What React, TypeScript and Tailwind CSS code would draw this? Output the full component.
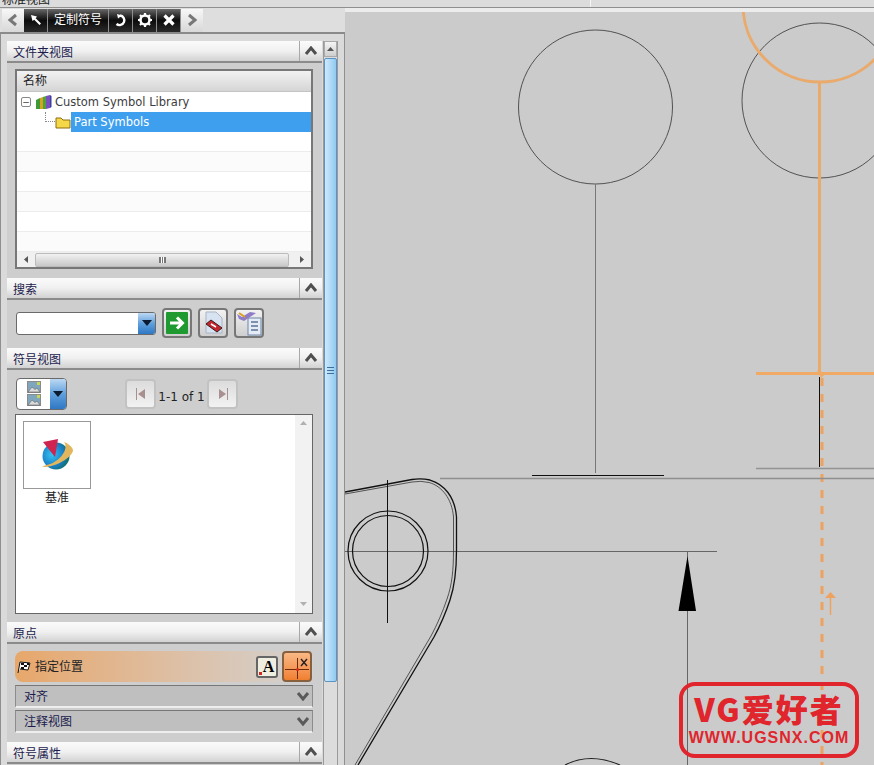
import type { ReactNode } from "react";

function Chevron({ down = false, color = "#4f4f4f" }: { down?: boolean; color?: string }) {
  return (
    <svg width="14" height="10" viewBox="0 0 14 10">
      <path
        d={down ? "M2 2 L7 8 L12 2" : "M2 8 L7 2 L12 8"}
        fill="none"
        stroke={color}
        strokeWidth="3"
      />
    </svg>
  );
}

function SectionHeader({ title }: { title: string }) {
  return (
    <div className="flex h-[22px] shrink-0 border-b-2 border-[#8b8b8b] bg-gradient-to-b from-[#fbfbfb] via-[#f0f0f0] to-[#d2d2d2]">
      <span className="flex-1 pl-[6px] text-[12px] leading-[24px] text-[#1b1b4d]">{title}</span>
      <span className="flex w-[23px] items-center justify-center border-l border-[#a8a8a8]">
        <Chevron />
      </span>
    </div>
  );
}

function ToolButton({ children, wide = false }: { children: ReactNode; wide?: boolean }) {
  return (
    <div
      className={`flex h-[23px] items-center justify-center border-r border-[#8e8e8e] bg-gradient-to-b from-[#6a6a6a] via-[#0c0c0c] to-[#2a2a2a] text-[12px] text-white ${
        wide ? "w-[61px]" : "w-[24px]"
      }`}
    >
      {children}
    </div>
  );
}

function IconButton({ children, className = "" }: { children: ReactNode; className?: string }) {
  return (
    <div
      className={`flex h-[30px] w-[30px] items-center justify-center rounded-[4px] border-2 border-[#777] bg-gradient-to-b from-[#f2f2f2] to-[#cfcfcf] ${className}`}
    >
      {children}
    </div>
  );
}

function DropArrow({ className = "" }: { className?: string }) {
  return (
    <div
      className={`flex items-center justify-center bg-gradient-to-b from-[#bcd8f2] via-[#5f9fdc] to-[#2f78c4] ${className}`}
    >
      <svg width="12" height="8" viewBox="0 0 12 8">
        <path d="M1 1 H11 L6 7 Z" fill="#0b1a2e" />
      </svg>
    </div>
  );
}

function FoldRow({ title }: { title: string }) {
  return (
    <div className="flex h-[23px] items-center border-x border-t border-b-2 border-x-[#8d8d8d] border-t-[#777] border-b-[#eeeeee] bg-[#bfbfbf] pl-[8px] pr-[2px]">
      <span className="flex-1 pt-[2px] text-[12px] text-[#1b1b4d]">{title}</span>
      <Chevron down color="#5a5a5a" />
    </div>
  );
}

function PicturePair() {
  return (
    <svg width="14" height="25" viewBox="0 0 14 25">
      <rect x="0.5" y="0.5" width="13" height="11" fill="#7fa6bd" stroke="#8a8a8a" />
      <path d="M1 11 L5 6 L8 8.5 L10 7 L13 11 Z" fill="#d9d9d9" stroke="#666" strokeWidth="0.6" />
      <rect x="10" y="1" width="3" height="3" fill="#c9d65a" />
      <rect x="0.5" y="13.5" width="13" height="11" fill="#7fa6bd" stroke="#8a8a8a" />
      <path d="M1 24 L5 19 L8 21.5 L10 20 L13 24 Z" fill="#d9d9d9" stroke="#666" strokeWidth="0.6" />
      <rect x="10" y="14" width="3" height="3" fill="#c9d65a" />
    </svg>
  );
}

function PartDrawing() {
  return (
    <svg className="h-full w-full" viewBox="345 12 529 753">
      {/* orange highlighted symbol */}
      <circle cx="595.5" cy="107" r="77" fill="none" stroke="#444" strokeWidth="0.9" />
      <circle cx="819.5" cy="100.5" r="77.5" fill="none" stroke="#444" strokeWidth="0.9" />
      <circle cx="820" cy="5" r="77" fill="none" stroke="#e9aa6c" strokeWidth="3" />
      <path d="M819.5 82 V373" stroke="#e9aa6c" strokeWidth="3" />
      <path d="M756 373.5 H874" stroke="#f0aa66" strokeWidth="3" />
      <path d="M817 370 L826 373.5 L821 378 Z" fill="#f0aa66" />
      <path d="M819.5 377 V467" stroke="#111" strokeWidth="1" />
      <path d="M822 378 V765" stroke="#eda35f" strokeWidth="3" strokeDasharray="8 8" />
      <path d="M830.5 615 V595" stroke="#eda35f" strokeWidth="1.5" />
      <path d="M825 598 L830.5 592 L836 598 Z" fill="#eda35f" />

      {/* plain lines */}
      <path d="M595.5 184 V473" stroke="#777" strokeWidth="1" />
      <path d="M532 475.5 H664" stroke="#111" strokeWidth="1" />
      <path d="M756 468.5 H874" stroke="#939393" strokeWidth="1.5" />
      <path d="M440 478.5 H874" stroke="#8f8f8f" strokeWidth="1.5" />
      <path d="M345 551.5 H717" stroke="#666" strokeWidth="1" />
      <path d="M687.5 551 V765" stroke="#666" strokeWidth="1" />
      <path d="M687.5 556 L678.5 611 H696 Z" fill="#000" />

      {/* part outline */}
      <path
        d="M345 492 L412 479.5 Q421 478 430 480 C444 484 455 497 456.5 517 V550 C456.5 570 455 585 450 600 C446 612 440 626 434 637 L358 765"
        fill="none"
        stroke="#111"
        strokeWidth="1.3"
      />
      <path
        d="M345 494 L412 482 Q421 480.5 429 482.5 C442 486 452 499 453.5 517 V550 C453.5 570 452 585 447 599 C443 611 437 625 431 636 L355 765"
        fill="none"
        stroke="#333"
        strokeWidth="0.8"
      />
      <circle cx="388" cy="551" r="40" fill="none" stroke="#111" strokeWidth="1.2" />
      <circle cx="388" cy="551" r="35.5" fill="none" stroke="#111" strokeWidth="1.2" />
      <path d="M387.5 480 V623" stroke="#111" strokeWidth="1" />
      <path d="M565 765 Q590 752 620 765" fill="none" stroke="#222" strokeWidth="1.2" />
    </svg>
  );
}

function App() {
  return (
    <div className="relative flex h-[765px] w-[874px] flex-col overflow-hidden bg-[#cbcbcb] font-['DejaVu_Sans','Noto_Sans_CJK_SC',sans-serif]">
      {/* window strip */}
      <div className="flex h-[8px] shrink-0 border-b border-[#8f8f8f] bg-[#dcdcdc]">
        <div className="w-[591px] overflow-hidden border-r border-[#f5f5f5] pl-[2px] text-[12px] leading-[1px] text-[#222]">
          标准视图
        </div>
      </div>

      <div className="flex min-h-0 flex-1">
        {/* left dock */}
        <div className="flex w-[345px] shrink-0 flex-col">
          <div className="flex h-[24px] shrink-0 items-center bg-[#dedede] pl-[2px]">
            <div className="flex h-[23px] w-[22px] items-center justify-center bg-gradient-to-b from-[#f7f7f7] to-[#d8d8d8]">
              <svg width="12" height="14" viewBox="0 0 12 14">
                <path d="M9 2 L3 7 L9 12" fill="none" stroke="#777" strokeWidth="3" />
              </svg>
            </div>
            <ToolButton>
              <svg width="14" height="14" viewBox="0 0 14 14">
                <path d="M2 2 L8 3.5 L6.7 5.2 L12 10.5 L10.5 12 L5.2 6.7 L3.5 8 Z" fill="#fff" />
              </svg>
            </ToolButton>
            <ToolButton wide>定制符号</ToolButton>
            <ToolButton>
              <svg width="14" height="14" viewBox="0 0 14 14">
                <path d="M6 2.5 A4.8 4.8 0 1 1 2.5 11" fill="none" stroke="#fff" strokeWidth="2.4" />
                <path d="M3 1 L8 2.5 L4 5.5 Z" fill="#fff" />
              </svg>
            </ToolButton>
            <ToolButton>
              <svg width="16" height="16" viewBox="0 0 16 16">
                <circle cx="8" cy="8" r="4.5" fill="none" stroke="#fff" strokeWidth="2.6" />
                <path
                  d="M8 1 V3 M8 13 V15 M1 8 H3 M13 8 H15 M3 3 L4.5 4.5 M11.5 11.5 L13 13 M13 3 L11.5 4.5 M4.5 11.5 L3 13"
                  stroke="#fff"
                  strokeWidth="2.2"
                />
              </svg>
            </ToolButton>
            <ToolButton>
              <svg width="14" height="14" viewBox="0 0 14 14">
                <path d="M2.5 2.5 L11.5 11.5 M11.5 2.5 L2.5 11.5" stroke="#fff" strokeWidth="3.2" />
              </svg>
            </ToolButton>
            <div className="flex h-[23px] w-[22px] items-center justify-center bg-gradient-to-b from-[#f7f7f7] to-[#d8d8d8]">
              <svg width="12" height="14" viewBox="0 0 12 14">
                <path d="M3 2 L9 7 L3 12" fill="none" stroke="#777" strokeWidth="3" />
              </svg>
            </div>
          </div>

          <div className="flex min-h-0 flex-1 overflow-hidden border-x border-t-2 border-x-[#8f8f8f] border-t-[#8a8a8a] bg-[#dadada] pl-[6px] pt-[7px]">
            <div className="flex w-[315px] shrink-0 flex-col bg-[#cecece]">
              <SectionHeader title="文件夹视图" />
              <div className="h-[215px] shrink-0 pl-[8px] pr-[9px] pt-[6px]">
                <div className="flex h-[200px] flex-col border-2 border-[#777] bg-white">
                  <div className="h-[21px] shrink-0 border-b border-[#c4c4c4] bg-gradient-to-b from-[#f2f2f2] to-[#d5d5d5] pl-[6px] text-[12px] leading-[20px] text-[#222]">
                    名称
                  </div>
                  <div className="flex h-[20px] shrink-0 items-center pl-[4px] text-[11.5px] text-[#3d3d3d]">
                    <span className="flex h-[10px] w-[10px] items-center justify-center rounded-[2px] border border-[#888] text-[9px] leading-none">
                      −
                    </span>
                    <svg className="ml-[4px]" width="17" height="16" viewBox="0 0 17 16">
                      <path d="M1 6 L5 4 V15 L1 15 Z" fill="#3e9a35" />
                      <path d="M5 4 L8 3 V15 L5 15 Z" fill="#d9a021" />
                      <path d="M8 3 L11 2 V15 L8 15 Z" fill="#4aa63c" />
                      <path d="M11 2 L15 1 V14 L11 15 Z" fill="#7a4fc0" />
                      <path d="M15 1 L16.5 2 V13 L15 14 Z" fill="#3f3f9c" />
                    </svg>
                    <span className="ml-[3px] pt-[2px]">Custom Symbol Library</span>
                  </div>
                  <div className="flex h-[20px] shrink-0 items-center pl-[28px] text-[11.5px]">
                    <div className="h-[10px] w-[10px] -translate-y-[5px] border-b border-l border-dotted border-[#888]" />
                    <svg width="16" height="14" viewBox="0 0 16 14">
                      <path d="M1 3 H6 L8 5 H15 V13 H1 Z" fill="#f5d848" stroke="#8c6d10" />
                    </svg>
                    <span className="flex h-[20px] flex-1 items-center bg-[#3f9fef] pl-[3px] pt-[2px] text-white">
                      Part Symbols
                    </span>
                  </div>
                  <div className="h-[20px] shrink-0 border-b border-[#ececec]" />
                  <div className="h-[20px] shrink-0 border-b border-[#ececec] bg-[#fbfbfb]" />
                  <div className="h-[20px] shrink-0 border-b border-[#ececec]" />
                  <div className="h-[20px] shrink-0 border-b border-[#ececec] bg-[#fbfbfb]" />
                  <div className="h-[20px] shrink-0 border-b border-[#ececec]" />
                  <div className="h-[20px] shrink-0 border-b border-[#ececec] bg-[#fbfbfb]" />
                  <div className="flex min-h-0 flex-1 items-center bg-[#f0f0f0]">
                    <svg className="ml-[7px]" width="5" height="7" viewBox="0 0 5 7">
                      <path d="M4 0 V7 L0 3.5 Z" fill="#555" />
                    </svg>
                    <div className="ml-[6px] flex h-[14px] w-[254px] items-center justify-center rounded-[2px] border border-[#bbb] bg-gradient-to-b from-[#f2f2f2] to-[#c8c8c8]">
                      <span className="h-[6px] w-[7px] border-x-2 border-[#777] bg-[linear-gradient(90deg,#fff_33%,#777_33%,#777_66%,#fff_66%)]" />
                    </div>
                    <svg className="ml-[10px]" width="5" height="7" viewBox="0 0 5 7">
                      <path d="M1 0 V7 L5 3.5 Z" fill="#555" />
                    </svg>
                  </div>
                </div>
              </div>

              <SectionHeader title="搜索" />
              <div className="flex h-[48px] shrink-0 items-center px-[9px] pb-[2px]">
                <div className="flex h-[23px] w-[140px] overflow-hidden rounded-[3px] border border-[#6a6a6a] bg-white">
                  <div className="flex-1" />
                  <DropArrow className="w-[17px]" />
                </div>
                <IconButton className="ml-[6px]">
                  <svg width="22" height="22" viewBox="0 0 22 22">
                    <rect x="0" y="0" width="22" height="22" rx="1" fill="#1f9a31" />
                    <path d="M4 11 H15 M11 5.5 L16.5 11 L11 16.5" fill="none" stroke="#fff" strokeWidth="3" />
                  </svg>
                </IconButton>
                <IconButton className="ml-[6px]">
                  <svg width="24" height="24" viewBox="0 0 24 24">
                    <path d="M5 1 H15 L21 7 V22 H5 Z" fill="#d8e3f2" stroke="#a9b4c4" />
                    <path d="M5 13 L10 9 L21 17 L16 21 Z" fill="#c4262e" stroke="#3d1b1b" />
                    <path d="M10 13 L15 16" stroke="#fff" strokeWidth="1.5" />
                  </svg>
                </IconButton>
                <IconButton className="ml-[6px]">
                  <svg width="26" height="26" viewBox="0 0 26 26">
                    <rect x="12" y="8" width="13" height="17" fill="#e4ebf5" stroke="#6c86a8" />
                    <path d="M15 12 H22 M15 16 H22 M15 20 H22" stroke="#5b7395" strokeWidth="1.5" />
                    <path d="M1 4 L6 7 L14 2 L20 3 L14 7 L8 11 L3 9 Z" fill="#8f7cc7" />
                    <path d="M3 3 L9 7" stroke="#d9a021" strokeWidth="2" />
                  </svg>
                </IconButton>
              </div>

              <SectionHeader title="符号视图" />
              <div className="h-[252px] shrink-0 pl-[8px] pr-[9px] pt-[7px]">
                <div className="flex h-[33px] items-center">
                  <div className="ml-[1px] flex h-[32px] w-[51px] overflow-hidden rounded-[4px] border border-[#6a6a6a] bg-white">
                    <div className="flex flex-1 items-center justify-center">
                      <PicturePair />
                    </div>
                    <DropArrow className="w-[16px]" />
                  </div>
                  <div className="ml-[58px] flex h-[30px] w-[31px] items-center justify-center rounded-[4px] border-2 border-[#c2c2c2] bg-gradient-to-b from-[#dcdcdc] to-[#f2f2f2]">
                    <svg width="12" height="14" viewBox="0 0 12 14">
                      <path d="M1.5 1 V13" stroke="#a98f8f" strokeWidth="1" />
                      <path d="M10 2 V12 L3 7 Z" fill="#a98f8f" />
                    </svg>
                  </div>
                  <span className="w-[51px] whitespace-nowrap pt-[7px] text-center text-[12px] text-[#222]">1-1 of 1</span>
                  <div className="flex h-[30px] w-[31px] items-center justify-center rounded-[4px] border-2 border-[#c2c2c2] bg-gradient-to-b from-[#dcdcdc] to-[#f2f2f2]">
                    <svg width="12" height="14" viewBox="0 0 12 14">
                      <path d="M10.5 1 V13" stroke="#a98f8f" strokeWidth="1" />
                      <path d="M2 2 V12 L9 7 Z" fill="#a98f8f" />
                    </svg>
                  </div>
                </div>
                <div className="mt-[4px] flex h-[200px] border border-[#666] bg-white">
                  <div className="flex-1 pl-[7px] pt-[6px]">
                    <div className="flex h-[68px] w-[68px] items-center justify-center border border-[#999]">
                      <svg width="36" height="36" viewBox="0 0 36 36">
                        <defs>
                          <radialGradient id="globeFill" cx="0.35" cy="0.45" r="0.7">
                            <stop offset="0" stopColor="#35c4f2" />
                            <stop offset="0.6" stopColor="#1a7fc8" />
                            <stop offset="1" stopColor="#0f6b55" />
                          </radialGradient>
                        </defs>
                        <circle cx="17" cy="19" r="13.5" fill="url(#globeFill)" />
                        <path d="M3 30 C16 31 34 20 34 13 C33 9 28 6 25 5 C31 13 18 27 7 28 Z" fill="#e2b65c" />
                        <path d="M4 5 L19 2 L16 20 Z" fill="#cf2350" />
                      </svg>
                    </div>
                    <div className="w-[68px] text-center text-[12px] text-[#222]">基准</div>
                  </div>
                  <div className="flex w-[17px] flex-col items-center justify-between bg-[#f2f2f2] py-[6px]">
                    <svg width="7" height="5" viewBox="0 0 7 5">
                      <path d="M0 4 H7 L3.5 0 Z" fill="#b0b0b0" />
                    </svg>
                    <svg width="7" height="5" viewBox="0 0 7 5">
                      <path d="M0 0 H7 L3.5 4 Z" fill="#b0b0b0" />
                    </svg>
                  </div>
                </div>
              </div>

              <SectionHeader title="原点" />
              <div className="h-[98px] shrink-0 pl-[8px] pr-[9px] pt-[7px]">
                <div className="flex h-[31px] items-center rounded-[8px] bg-gradient-to-r from-[#e7a76a] to-[#d2d2d2] pl-[1px] pr-[1px]">
                  <svg width="16" height="14" viewBox="0 0 16 14">
                    <path d="M2 13 L4 2 L14 3 L12 10 L4 9" fill="#fff" stroke="#111" />
                    <path d="M5 3 H8 V5 H5 Z M8 5 H11 V7 H8 Z M5 7 H8 V9 H5 Z M11 3 H13 V5 H11 Z" fill="#111" />
                  </svg>
                  <span className="ml-[3px] flex-1 text-[12px] text-[#222]">指定位置</span>
                  <div className="relative flex h-[22px] w-[22px] items-center justify-center rounded-[3px] border-2 border-[#666] bg-[#f0eee0]">
                    <span className="pl-[3px] font-['Liberation_Serif',serif] text-[16px] font-bold leading-none text-black">A</span>
                    <span className="absolute bottom-[1px] left-[1px] h-[3px] w-[3px] bg-[#d8261c]" />
                  </div>
                  <div className="ml-[4px] flex h-[31px] w-[30px] items-center justify-center rounded-[4px] border-2 border-[#86603f] bg-gradient-to-b from-[#f9b884] to-[#f07f2e]">
                    <svg width="24" height="24" viewBox="0 0 24 24">
                      <path d="M0 14.5 H24 M12.5 3 V24" stroke="#6b2a08" strokeWidth="1" />
                      <circle cx="12.5" cy="14.5" r="1.5" fill="#d8261c" />
                      <path d="M16 4 L22 11 M22 4 L16 11" stroke="#222" strokeWidth="1.4" />
                    </svg>
                  </div>
                </div>
                <div className="mt-[3px] flex flex-col gap-[2px]">
                  <FoldRow title="对齐" />
                  <FoldRow title="注释视图" />
                </div>
              </div>

              <SectionHeader title="符号属性" />
            </div>

            {/* dock scrollbar */}
            <div className="ml-[1px] flex w-[15px] shrink-0 flex-col border-x border-[#9a9a9a] bg-[#dcdcdc]">
              <div className="flex h-[16px] items-center justify-center border border-[#aaa] bg-gradient-to-b from-[#f4f4f4] to-[#cfcfcf]">
                <svg width="7" height="5" viewBox="0 0 7 5">
                  <path d="M0 4 H7 L3.5 0 Z" fill="#555" />
                </svg>
              </div>
              <div className="mt-[1px] flex h-[624px] items-center justify-center rounded-[2px] border border-[#5a93c4] bg-gradient-to-r from-[#cfe9fb] to-[#8fcaef]">
                <span className="h-[7px] w-[7px] border-y border-[#3c6f9c] bg-[linear-gradient(180deg,transparent_40%,#3c6f9c_40%,#3c6f9c_60%,transparent_60%)]" />
              </div>
            </div>
          </div>
        </div>

        {/* graphics window */}
        <div className="flex min-w-0 flex-1 flex-col">
          <div className="h-[4px] shrink-0 bg-[#ececec]" />
          <div className="min-h-0 flex-1">
            <PartDrawing />
          </div>
        </div>
      </div>

      {/* watermark over the drawing */}
      <div className="absolute left-[679px] top-[682px] flex h-[76px] w-[180px] flex-col items-center rounded-[16px] border-[4px] border-[#e0252c] text-[#e0252c]">
        <div className="mt-[4px] whitespace-nowrap font-['Noto_Sans_CJK_SC',sans-serif] text-[32px] font-black leading-[36px] tracking-[2px]">
          VG爱好者
        </div>
        <div className="mt-[4px] whitespace-nowrap font-['Liberation_Sans',sans-serif] text-[16px] font-bold leading-[15px] tracking-[1px]">
          WWW.UGSNX.COM
        </div>
      </div>
    </div>
  );
}

export default App;
